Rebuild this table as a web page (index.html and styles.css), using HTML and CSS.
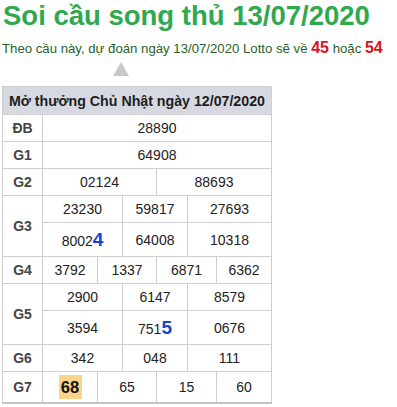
FILE: index.html
```html
<!DOCTYPE html>
<html lang="vi">
<head>
<meta charset="utf-8">
<title>Soi cầu song thủ 13/07/2020</title>
<link rel="stylesheet" href="styles.css">
</head>
<body>
<div class="page">
  <h1 class="title">Soi cầu song thủ 13/07/2020</h1>
  <p class="lead">Theo cầu này, dự đoán ngày 13/07/2020 Lotto sẽ về <b class="hit">45</b> hoặc <b class="hit">54</b></p>
  <div class="pointer-row"><span class="pointer"></span></div>
  <table class="kq">
    <colgroup>
      <col class="c-label"><col class="c1"><col class="c2"><col class="c3"><col class="c4"><col class="c5"><col class="c6">
    </colgroup>
    <tr class="head"><th colspan="7">Mở thưởng Chủ Nhật ngày 12/07/2020</th></tr>
    <tr><td class="lbl">ĐB</td><td colspan="6">28890</td></tr>
    <tr><td class="lbl">G1</td><td colspan="6">64908</td></tr>
    <tr><td class="lbl">G2</td><td colspan="3">02124</td><td colspan="3">88693</td></tr>
    <tr><td class="lbl" rowspan="2">G3</td><td colspan="2">23230</td><td colspan="2">59817</td><td colspan="2">27693</td></tr>
    <tr class="tall"><td colspan="2">8002<span class="big">4</span></td><td colspan="2">64008</td><td colspan="2">10318</td></tr>
    <tr><td class="lbl">G4</td><td>3792</td><td colspan="2">1337</td><td colspan="2">6871</td><td>6362</td></tr>
    <tr><td class="lbl" rowspan="2">G5</td><td colspan="2">2900</td><td colspan="2">6147</td><td colspan="2">8579</td></tr>
    <tr class="tall"><td colspan="2">3594</td><td colspan="2">751<span class="big">5</span></td><td colspan="2">0676</td></tr>
    <tr><td class="lbl">G6</td><td colspan="2">342</td><td colspan="2">048</td><td colspan="2">111</td></tr>
    <tr class="g7"><td class="lbl">G7</td><td><span class="mark">68</span></td><td colspan="2">65</td><td colspan="2">15</td><td>60</td></tr>
  </table>
</div>
</body>
</html>
```
FILE: styles.css
```css
* { box-sizing: border-box; }
html, body { margin: 0; padding: 0; background: #fff; }
body { font-family: "Liberation Sans", Arial, sans-serif; color: #222; }
.page { padding: 0 2px; width: 397px; }
.title {
  margin: 0;
  font-size: 27.5px;
  line-height: 32px;
  font-weight: bold;
  color: #2fa84f;
  padding-left: 1px;
}
.lead {
  margin: 8px 0 0;
  font-size: 13.2px;
  line-height: 16px;
  color: #2a5f2a;
}
.hit { color: #d7141c; font-size: 16px; }
.pointer-row { height: 29px; padding-top: 5px; padding-left: 111px; }
.pointer {
  display: block;
  width: 0; height: 0;
  border-left: 8px solid transparent;
  border-right: 8px solid transparent;
  border-bottom: 14px solid #c8c8c8;
}
.kq {
  border-collapse: collapse;
  table-layout: fixed;
  width: 270px;
  font-size: 14px;
  border-bottom: 2px solid #c4c4c4;
}
.c-label { width: 40px; }
.c1 { width: 55px; }
.c2 { width: 25px; }
.c3 { width: 34px; }
.c4 { width: 31px; }
.c5 { width: 29px; }
.c6 { width: 55px; }
.kq th, .kq td {
  border: 1px solid #cfcfcf;
  padding: 0;
  height: 27px;
  line-height: 16px;
  text-align: center;
  vertical-align: middle;
  color: #222;
  white-space: nowrap;
}
.kq .head th {
  background: #d6d9e2;
  text-align: left;
  padding-left: 6px;
  font-size: 14.2px;
  font-weight: bold;
  color: #1e1e1e;
  height: 28px;
}
.kq td.lbl { font-weight: bold; color: #444; }
.kq tr.tall td { height: 34px; }
.kq tr.g7 td { height: 31px; }
.big { color: #1c3fd3; font-weight: bold; font-size: 19px; line-height: 1; }
.mark {
  display: inline-block;
  background: #fbd38a;
  font-weight: bold;
  font-size: 16.5px;
  color: #111;
  width: 23px;
  height: 24px;
  line-height: 24px;
}
```
